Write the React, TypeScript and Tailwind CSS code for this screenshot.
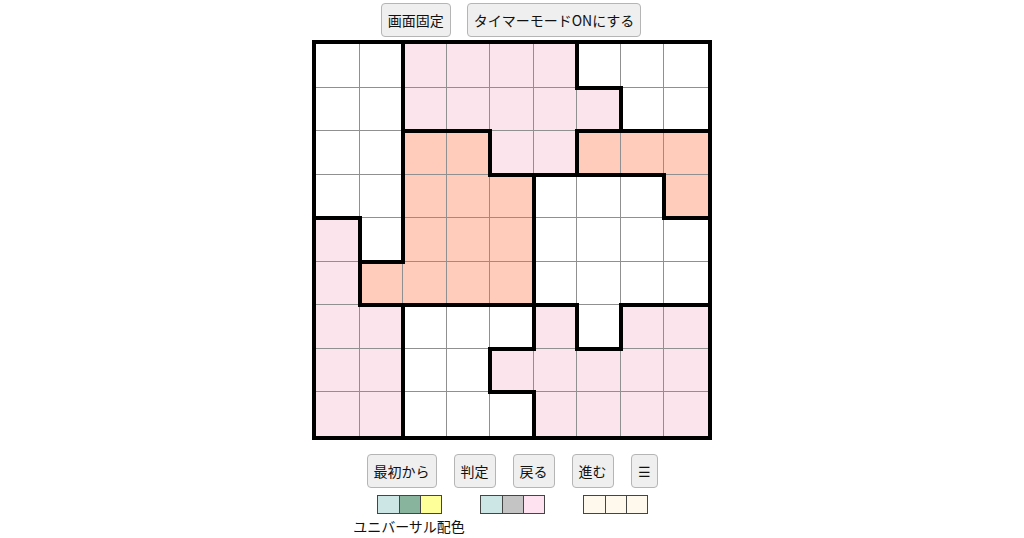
const COLOR: Record<string, string> = {
  w: 'bg-white',
  p: 'bg-[#fce4ec]',
  o: 'bg-[#ffccbc]',
};

// 盤面の色 (w: 白, p: ピンク, o: オレンジ)
const BOARD = [
  'wwppppwww',
  'wwpppppww',
  'wwooppooo',
  'wwooowwwo',
  'pwooowwww',
  'poooowwww',
  'ppwwwpwpp',
  'ppwwppppp',
  'ppwwwpppp',
];

const SWATCHES = [
  ['bg-[#cce6e6]', 'bg-[#88b49e]', 'bg-[#ffff99]'],
  ['bg-[#cce6e6]', 'bg-[#c4c4c4]', 'bg-[#ffe2f0]'],
  ['bg-[#fff8ec]', 'bg-[#fff8ec]', 'bg-[#fff8ec]'],
];

function Btn({ children }: { children: React.ReactNode }) {
  return (
    <button className="h-[34px] px-[6px] rounded-[4px] border border-[#b5b5b5] bg-[#efefef] text-[14px] leading-none text-[#111]">
      {children}
    </button>
  );
}

function Cell({ r, c }: { r: number; c: number }) {
  const v = BOARD[r][c];
  const thickRight = c < 8 && BOARD[r][c + 1] !== v;
  const thickBottom = r < 8 && BOARD[r + 1][c] !== v;
  return (
    <div
      className={`relative ${COLOR[v]} ${c < 8 ? 'border-r border-r-[#909090]' : ''} ${r < 8 ? 'border-b border-b-[#909090]' : ''}`}
    >
      {thickRight && <span className="absolute -right-[3px] -top-[2px] -bottom-[3px] w-[4px] bg-black z-10" />}
      {thickBottom && <span className="absolute -bottom-[3px] -left-[2px] -right-[3px] h-[4px] bg-black z-10" />}
    </div>
  );
}

export default function App() {
  return (
    <div
      className="w-[1024px] h-[538px] bg-white flex flex-col items-center overflow-hidden"
      style={{ fontFamily: '"Noto Sans CJK JP", "Noto Sans", sans-serif' }}
    >
      {/* 上部ボタン */}
      <div className="mt-[3px] flex gap-[16px] -translate-x-[1px]">
        <Btn>画面固定</Btn>
        <Btn>タイマーモードONにする</Btn>
      </div>

      {/* 盤面 */}
      <div className="mt-[3px] w-[400px] h-[400px] border-4 border-black grid grid-cols-9 grid-rows-9">
        {BOARD.map((row, r) => row.split('').map((_, c) => <Cell key={`${r}-${c}`} r={r} c={c} />))}
      </div>

      {/* 操作ボタン */}
      <div className="mt-[14px] flex gap-[17px]">
        <Btn>最初から</Btn>
        <Btn>判定</Btn>
        <Btn>戻る</Btn>
        <Btn>進む</Btn>
        <Btn>☰</Btn>
      </div>

      {/* 配色 */}
      <div className="mt-[7px] flex gap-[36px] items-start">
        {SWATCHES.map((group, i) => (
          <div key={i} className="flex flex-col items-center w-[67px]">
            <div className="flex border border-[#444] h-[19px]">
              {group.map((cls, j) => (
                <div key={j} className={`w-[21px] ${cls} ${j > 0 ? 'border-l border-[#444]' : ''}`} />
              ))}
            </div>
            {i === 0 && <div className="mt-[2px] whitespace-nowrap text-[14px] leading-[20px] text-[#111]">ユニバーサル配色</div>}
          </div>
        ))}
      </div>
    </div>
  );
}
